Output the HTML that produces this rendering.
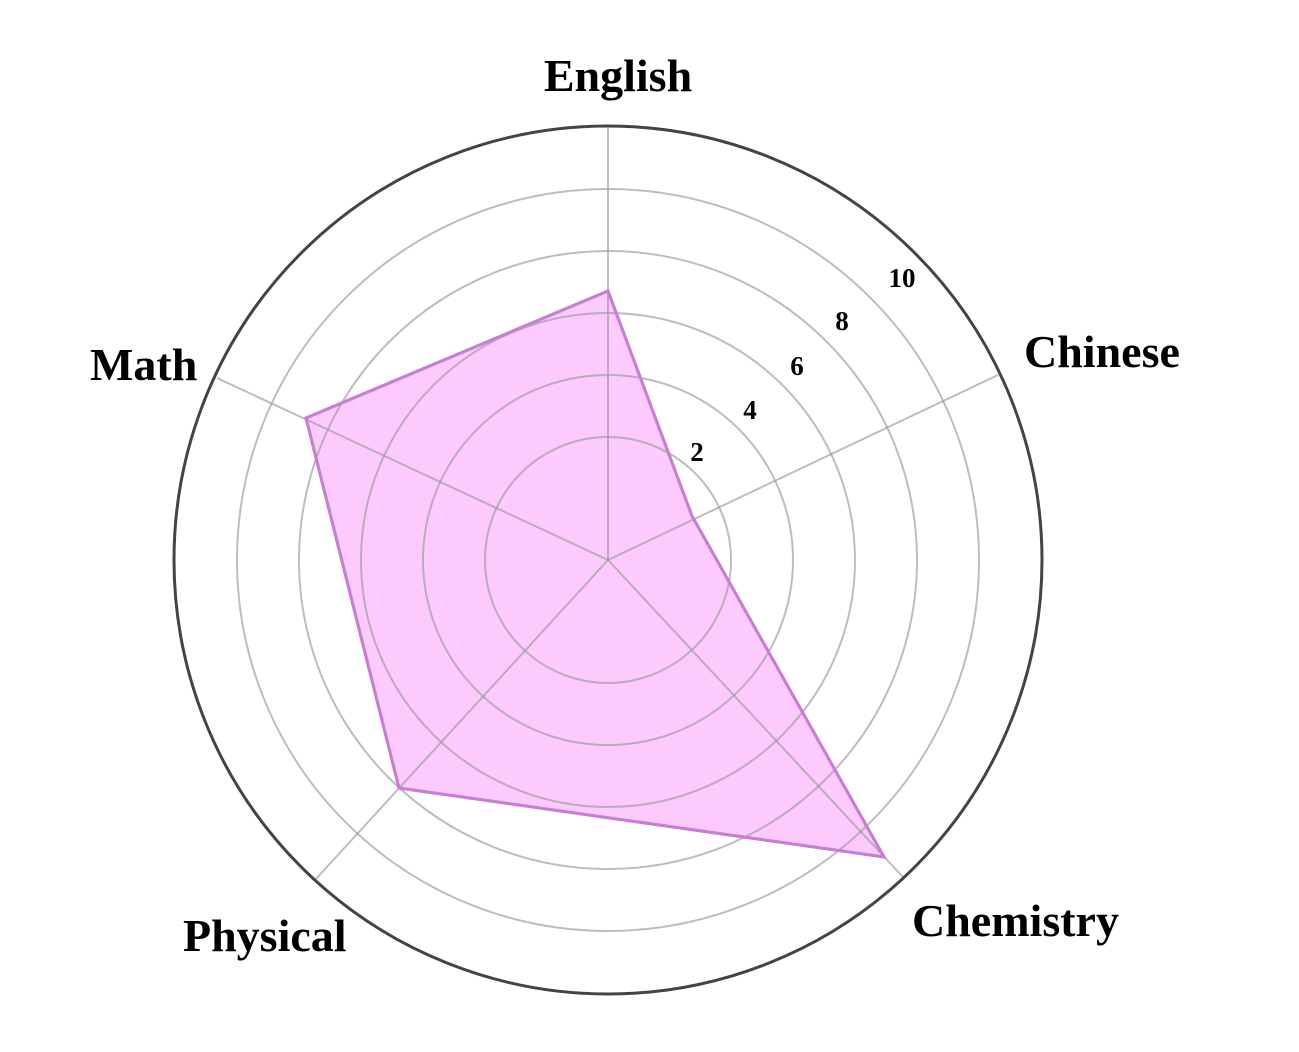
<!DOCTYPE html>
<html><head><meta charset="utf-8"><style>html,body{margin:0;padding:0;background:#fff}</style></head>
<body>
<svg width="1299" height="1047" viewBox="0 0 1299 1047" xmlns="http://www.w3.org/2000/svg" font-family="Liberation Serif, serif" font-weight="bold">
<rect width="1299" height="1047" fill="#fff"/>
<polygon points="608,291 692,516 884,857 399,788 306,418" fill="#fccafd" stroke="#c77fd4" stroke-width="3"/>
<g fill="none" stroke="#999" stroke-opacity="0.65" stroke-width="2">
<circle cx="608" cy="560" r="123"/>
<circle cx="608" cy="560" r="185"/>
<circle cx="608" cy="560" r="247"/>
<circle cx="608" cy="560" r="309"/>
<circle cx="608" cy="560" r="371"/>
<line x1="608" y1="560" x2="608" y2="126"/>
<line x1="608" y1="560" x2="998" y2="375"/>
<line x1="608" y1="560" x2="903" y2="877"/>
<line x1="608" y1="560" x2="315" y2="880"/>
<line x1="608" y1="560" x2="217" y2="378"/>
</g>
<polygon points="608,291 692,516 884,857 399,788 306,418" fill="none" stroke="#c77fd4" stroke-width="3"/>
<circle cx="608" cy="560" r="434" fill="none" stroke="#444" stroke-width="3"/>
<g font-size="46" fill="#000">
<text x="618" y="91" text-anchor="middle">English</text>
<text x="1024" y="367">Chinese</text>
<text x="90" y="380">Math</text>
<text x="183" y="951">Physical</text>
<text x="912" y="936">Chemistry</text>
</g>
<g font-size="27" fill="#000" text-anchor="middle">
<text x="697" y="461">2</text>
<text x="750" y="419">4</text>
<text x="797" y="375">6</text>
<text x="842" y="330">8</text>
<text x="902" y="287">10</text>
</g>
</svg>
</body></html>
